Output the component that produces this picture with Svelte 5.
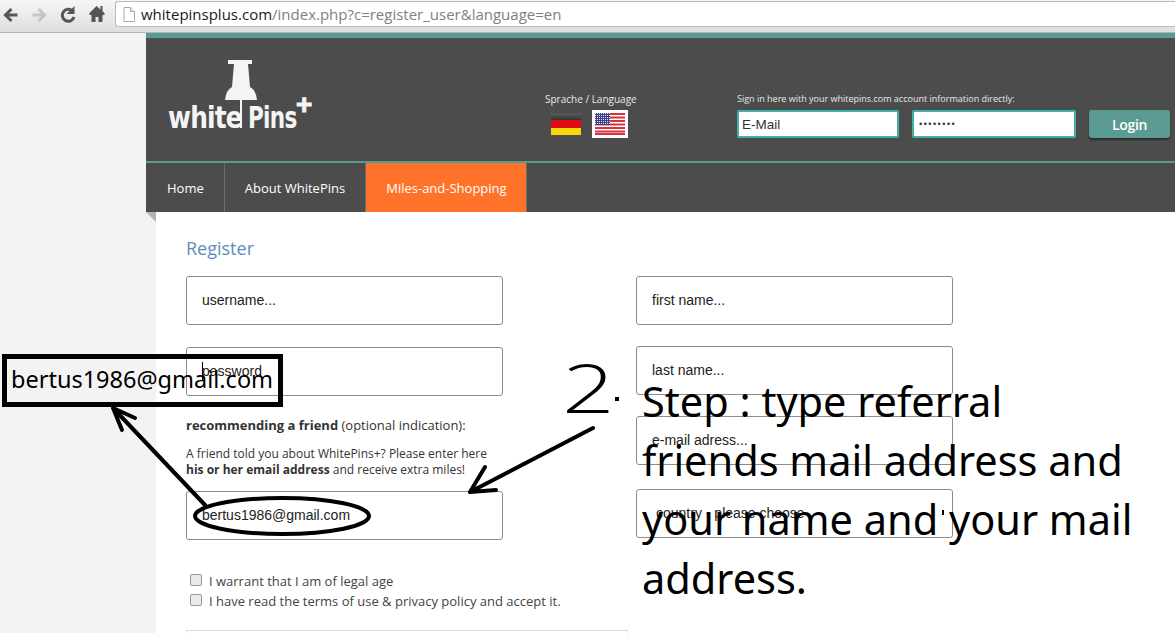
<script>
	const navItems = ['Home', 'About WhitePins', 'Miles-and-Shopping'];
	const stepLines = ['Step : type referral', 'friends mail address and', 'your name and your mail', 'address.'];
</script>

<div class="toolbar">
	<svg class="nav-icons" width="112" height="32" viewBox="0 0 112 32">
		<path d="M16 15H4M10 9l-6 6 6 6" fill="none" stroke="#555" stroke-width="3" />
		<path d="M31 15h12M37 9l6 6-6 6" fill="none" stroke="#c4c4c4" stroke-width="3" />
		<path d="M71 11a6 6 0 1 0 1.500 6" fill="none" stroke="#555" stroke-width="3" />
		<path d="M73 6v8h-8z" fill="#555" />
		<path d="M95 6l-7 7v2h2v7h4v-5h3v5h4v-7h2v-2z" fill="#555" />
		<rect x="99" y="6" width="2" height="5" fill="#555" />
	</svg>
	<div class="urlbar">
		<svg width="12" height="15" viewBox="0 0 12 15">
			<path d="M1 .5h6.500l4 4v10H1z" fill="#fff" stroke="#aaa" />
			<path d="M7.500 .5v4h4" fill="#eee" stroke="#aaa" />
		</svg>
		<span class="host">whitepinsplus.com</span><span class="path">/index.php?c=register_user&amp;language=en</span>
	</div>
</div>

<div class="page">
	<div class="site">
		<header>
			<div class="top">
				<div class="logo">
					<svg class="pin" width="32" height="70" viewBox="0 0 32 70">
						<path d="M3 0h24v4h-4l2 23q6 3 7 13H17v28h-2V40H0q1-10 7-13l2-23H3z" fill="#f4f4f4" />
					</svg>
					<span class="word white">white</span>
					<span class="word pins">Pins</span>
					<span class="plus">+</span>
				</div>
				<div class="language">
					<p>Sprache / Language</p>
					<div class="flags">
						<div class="flag-de"></div>
						<div class="flag-us">
							<svg width="30" height="22" viewBox="0 0 30 22">
								<rect width="30" height="22" fill="#fff" />
								<path d="M0 1h30M0 4.500h30M0 8h30M0 11.500h30M0 15h30M0 18.500h30M0 21h30" stroke="#d8333c" stroke-width="1.800" />
								<rect width="15" height="12" fill="#3c3c8e" />
								<rect width="15" height="12" fill="url(#stars)" />
								<defs>
									<pattern id="stars" width="2" height="2" patternUnits="userSpaceOnUse">
										<rect width="1" height="1" fill="#e4e4f0" />
									</pattern>
								</defs>
							</svg>
						</div>
					</div>
				</div>
				<div class="signin">
					<p>Sign in here with your whitepins.com account information directly:</p>
					<div class="signin-row">
						<input class="login-input" value="E-Mail" />
						<input class="login-input pass" type="password" value="password" />
						<button>Login</button>
					</div>
				</div>
			</div>
			<nav>
				{#each navItems as item, i}
					<a href="#top" class:active={i === 2}>{item}</a>
				{/each}
			</nav>
		</header>

		<main>
			<div class="fold"></div>
			<h1>Register</h1>
			<div class="columns">
				<div class="col">
					<input class="field" placeholder="username..." />
					<input class="field second" placeholder="password" />
					<p class="friend-title"><b>recommending a friend</b> (optional indication):</p>
					<p class="friend-text">
						A friend told you about WhitePins+? Please enter here<br />
						<b>his or her email address</b> and receive extra miles!
					</p>
					<input class="field" value="bertus1986@gmail.com" />
					<label class="first-check"><input type="checkbox" /> I warrant that I am of legal age</label>
					<label><input type="checkbox" /> I have read the terms of use &amp; privacy policy and accept it.</label>
					<div class="terms"></div>
				</div>
				<div class="col right">
					<input class="field" placeholder="first name..." />
					<input class="field tight" placeholder="last name..." />
					<input class="field tight" placeholder="e-mail adress..." />
					<select class="field country">
						<option>country - please choose</option>
					</select>
				</div>
			</div>
		</main>
	</div>

	<svg class="scribble" width="1175" height="633" viewBox="0 0 1175 633">
		<g fill="none" stroke="#000" stroke-linecap="round" stroke-linejoin="round">
			<path d="M205 505L113 408M113 408l9 22M113 408l22 10" stroke-width="4" />
			<path d="M593 428L470 492M470 492l15-25M470 492l26-2" stroke-width="4" />
			<ellipse cx="282" cy="516" rx="87" ry="18" stroke-width="4" />
		</g>
		<rect x="202" y="362" width="1" height="18" />
		<rect x="615" y="397" width="4" height="4" />
		<rect x="942" y="510" width="2" height="5" />
	</svg>
	<span class="hand-two">2</span>
	<div class="mail-box">bertus1986@gmail.com</div>
	<div class="step">
		{#each stepLines as line}
			<div>{line}</div>
		{/each}
	</div>
</div>

<style>
	:global(body) {
		margin: 0;
		background: #f3f3f3;
		overflow: hidden;
	}

	.toolbar {
		height: 32px;
		display: flex;
		background: linear-gradient(#f6f6f6, #dedede);
		border-bottom: 1px solid #b4b4b4;
	}

	.nav-icons {
		flex: none;
		width: 115px;
	}

	.urlbar {
		flex: 1;
		box-sizing: border-box;
		height: 26px;
		margin-top: 1px;
		background: #fff;
		border: 1px solid #bbb;
		border-right: none;
		border-radius: 3px 0 0 3px;
		display: flex;
		align-items: center;
		padding-left: 7px;
		font: 15px 'Open Sans', sans-serif;
		white-space: nowrap;
	}

	.urlbar svg {
		margin-right: 6px;
	}

	.host {
		color: #1a1a1a;
	}

	.path {
		color: #808080;
	}

	.page {
		position: relative;
		height: 600px;
		overflow: hidden;
		font-family: 'Open Sans', sans-serif;
	}

	.site {
		margin-left: 146px;
	}

	header {
		background: #4c4c4c;
		border-top: 5px solid #5a9a92;
	}

	.top {
		height: 125px;
		display: flex;
		align-items: flex-end;
		padding: 0 5px 23px 22px;
		box-sizing: border-box;
		border-bottom: 2px solid #5a9a92;
	}

	.logo {
		position: relative;
		width: 377px;
		height: 70px;
		flex: none;
		margin-bottom: 8px;
		color: #f4f4f4;
	}

	.pin {
		position: absolute;
		left: 57px;
		top: 0;
	}

	.word {
		position: absolute;
		top: 41px;
		font: bold 30px/34px 'DejaVu Sans', sans-serif;
		transform: scaleX(0.83);
		transform-origin: left;
		letter-spacing: -1px;
	}

	.white {
		left: 0;
	}

	.pins {
		left: 80px;
		transform: scaleX(0.72);
	}

	.plus {
		position: absolute;
		left: 128px;
		top: 31px;
		font: bold 28px/28px 'Liberation Sans', sans-serif;
		-webkit-text-stroke: 1px #f4f4f4;
	}

	.language {
		width: 192px;
		flex: none;
	}

	.language p,
	.signin p {
		margin: 0 0 5px;
		font-size: 9px;
		line-height: 12px;
		color: #e8e8e8;
	}

	.language p {
		font-size: 10px;
	}

	.flags {
		display: flex;
		align-items: center;
		gap: 11px;
		padding-left: 6px;
	}

	.flag-de {
		width: 30px;
		height: 22px;
		background: linear-gradient(#5c5c5c, #333 33%, #dc0e14 33% 66%, #fbd50c 66%);
	}

	.flag-us {
		width: 36px;
		height: 28px;
		background: #fff;
		display: flex;
		align-items: center;
		justify-content: center;
	}

	.signin-row {
		display: flex;
		align-items: stretch;
		gap: 13px;
	}

	.login-input {
		width: 162px;
		height: 28px;
		box-sizing: border-box;
		border: 2px solid #45b0a6;
		border-radius: 2px;
		padding: 0 3px;
		font: 13.500px 'Liberation Sans', sans-serif;
		color: #333;
		background: #fff;
		outline: none;
	}

	.pass {
		width: 164px;
		padding-left: 5px;
		font-size: 9px;
		letter-spacing: 1.500px;
	}

	button {
		width: 81px;
		height: 28px;
		border: none;
		border-radius: 3px;
		background: #5a9a92;
		box-shadow: 0 2px 2px #2c2c2c;
		color: #fff;
		font: 600 14px 'Open Sans', sans-serif;
		letter-spacing: -0.3px;
	}

	nav {
		height: 49px;
		display: flex;
	}

	nav a {
		display: flex;
		align-items: center;
		padding: 0 20px;
		border-right: 1px solid #6c6c6c;
		color: #fff;
		font-size: 13px;
		text-decoration: none;
	}

	nav a:first-child {
		padding-left: 21px;
	}

	nav a.active {
		background: #ff722a;
		padding-right: 19px;
	}

	main {
		position: relative;
		margin-left: 10px;
		padding: 24px 0 0 30px;
		height: 400px;
		background: #fff;
	}

	.fold {
		position: absolute;
		left: -10px;
		top: 0;
		border-top: 10px solid #b3b3b3;
		border-left: 10px solid transparent;
	}

	h1 {
		margin: 0 0 15px;
		font-size: 18px;
		line-height: 25px;
		font-weight: 400;
		color: #5f8bbd;
	}

	.columns {
		display: grid;
		grid-template-columns: 317px 317px;
		column-gap: 133px;
	}

	.col {
		display: flex;
		flex-direction: column;
		align-items: flex-start;
	}

	.field {
		width: 317px;
		height: 49px;
		box-sizing: border-box;
		flex: none;
		border: 1px solid #8c8c8c;
		border-radius: 3px;
		padding: 0 15px 2px;
		background: #fff;
		font: 14px 'Liberation Sans', sans-serif;
		color: #222;
		outline: none;
	}

	.field::placeholder {
		color: #222;
		opacity: 1;
	}

	.second {
		margin-top: 22px;
	}

	.tight {
		margin-top: 21px;
	}

	.country {
		margin-top: 24px;
		appearance: none;
		padding-left: 19px;
	}

	.friend-title {
		margin: 20px 0 0;
		font-size: 13px;
		line-height: 18px;
		color: #333;
	}

	.friend-text {
		margin: 12px 0 0;
		font-size: 12px;
		line-height: 16px;
		color: #333;
		white-space: nowrap;
	}

	.friend-text + .field {
		margin-top: 13px;
	}

	label {
		display: flex;
		align-items: center;
		height: 20px;
		padding-left: 4px;
		font-size: 13px;
		color: #444;
		gap: 7px;
		white-space: nowrap;
	}

	label input {
		appearance: none;
		margin: 0 0 2px;
		width: 12px;
		height: 12px;
		box-sizing: border-box;
		background: #e9e9e9;
		border: 1px solid #999;
		border-radius: 2px;
	}

	.first-check {
		margin-top: 31px;
	}

	.terms {
		margin-top: 19px;
		width: 442px;
		height: 40px;
		box-sizing: border-box;
		border: 1px solid #ddd;
	}

	.scribble {
		position: absolute;
		left: 0;
		top: -33px;
		pointer-events: none;
	}

	.hand-two {
		position: absolute;
		left: 562px;
		top: 316px;
		font: 300 66px/76px 'Open Sans', sans-serif;
		color: #000;
		transform: scaleX(1.4);
		transform-origin: left;
	}

	.mail-box {
		position: absolute;
		left: 2px;
		top: 321px;
		width: 281px;
		height: 53px;
		box-sizing: border-box;
		border: 5px solid #000;
		padding-left: 4px;
		font: 23.500px/41px 'Noto Sans', sans-serif;
		color: #000;
		white-space: nowrap;
	}

	.step {
		position: absolute;
		left: 642px;
		top: 339px;
		font: 41.500px/59px 'Noto Sans', sans-serif;
		color: #000;
		white-space: nowrap;
	}
</style>
